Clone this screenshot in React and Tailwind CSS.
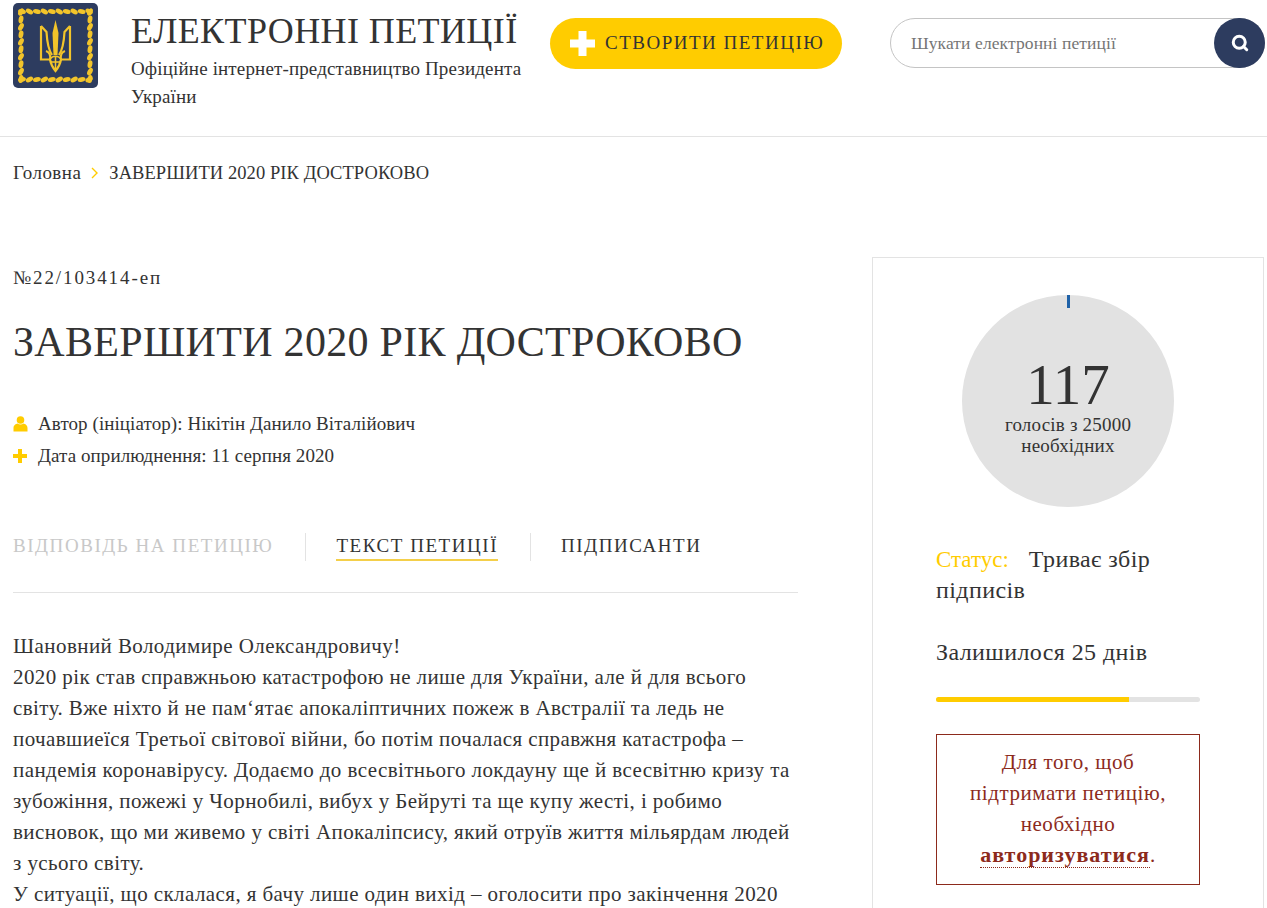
import React from 'react';
import { Search } from 'lucide-react';

const serif = "font-['Liberation_Serif','Times_New_Roman',serif]";

// leaves of the wreath around the trident, pairs along each side
const leaves = [];
for (let i = 0; i < 10; i++) {
  const p = 9 + i * 7.45;
  const tilt = i % 2 ? 32 : 14;
  leaves.push(<ellipse key={'t' + i} cx={p} cy={8.5} rx="4" ry="2.4" transform={`rotate(${tilt} ${p} 8.5)`} />);
  leaves.push(<ellipse key={'b' + i} cx={p} cy={76.5} rx="4" ry="2.4" transform={`rotate(${-tilt} ${p} 76.5)`} />);
  leaves.push(<ellipse key={'l' + i} cx={8} cy={p} rx="4" ry="2.4" transform={`rotate(${-48 - tilt} 8 ${p})`} />);
  leaves.push(<ellipse key={'r' + i} cx={77} cy={p} rx="4" ry="2.4" transform={`rotate(${-48 - tilt} 77 ${p})`} />);
}

const Logo = () => (
  <svg width="85" height="85" viewBox="0 0 85 85" className="shrink-0">
    <rect width="85" height="85" rx="5" fill="#2d3c5f" />
    <g fill="#f2c42a">{leaves}</g>
    <path d="M42.5 17 L45.5 30 L44.5 52 L40.5 52 L39.5 30 Z" fill="#f2c42a" />
    <g fill="none" stroke="#f2c42a" strokeWidth="2.2">
      <path d="M28 23 L33.5 29 C34 38 35 46 39 52 M28 23 V56.5 H37" />
      <path d="M57 23 L51.5 29 C51 38 50 46 46 52 M57 23 V56.5 H48" />
      <path d="M33 48 C36 49 38 51 37 56.5 C38 62 40 65 42.5 68 C45 65 47 62 48 56.5 C47 51 49 49 52 48" />
      <path d="M37 56.5 C39 52 46 52 48 56.5 M37.5 59 H47.5 M42.5 53 V66" strokeWidth="1.5" />
    </g>
  </svg>
);

// blocky plus, square ends like the icon font on the site
const BlockPlus = ({ size, thick, color }) => {
  const a = (size - thick) / 2;
  return (
    <svg width={size} height={size} viewBox={`0 0 ${size} ${size}`} className="shrink-0" fill={color}>
      <rect x={a} y="0" width={thick} height={size} />
      <rect x="0" y={a} width={size} height={thick} />
    </svg>
  );
};

const UserIcon = () => (
  <svg width="15" height="16" viewBox="0 0 15 16" fill="#ffcc00" className="shrink-0">
    <circle cx="7.5" cy="4" r="3.8" />
    <path d="M0.5 15.5 V12 C0.5 9.2 3 8 4.5 7.6 C6.2 8.8 8.8 8.8 10.5 7.6 C12 8 14.5 9.2 14.5 12 V15.5 Z" />
  </svg>
);

const Tab = ({ children, muted, active }) => (
  <span
    className={
      'text-[19px] leading-[24px] tracking-[1.55px] ' +
      (muted ? 'text-[#c8c8c8] ' : 'text-[#333] ') +
      (active ? 'border-b-2 border-[#f4cf4a] pb-[1px]' : 'pb-[3px]')
    }
  >
    {children}
  </span>
);

const bodyLines = [
  'Шановний Володимире Олександровичу!',
  '2020 рік став справжньою катастрофою не лише для України, але й для всього',
  'світу. Вже ніхто й не пам‘ятає апокаліптичних пожеж в Австралії та ледь не',
  'почавшиеїся Третьої світової війни, бо потім почалася справжня катастрофа –',
  'пандемія коронавірусу. Додаємо до всесвітнього локдауну ще й всесвітню кризу та',
  'зубожіння, пожежі у Чорнобилі, вибух у Бейруті та ще купу жесті, і робимо',
  'висновок, що ми живемо у світі Апокаліпсису, який отруїв життя мільярдам людей',
  'з усього світу.',
  'У ситуації, що склалася, я бачу лише один вихід – оголосити про закінчення 2020',
];

const App = () => {
  return (
    <div className={`${serif} w-[1267px] h-[908px] overflow-hidden bg-white text-[#333]`}>
      {/* Header */}
      <header className="h-[137px] border-b border-[#e3e3e3] flex items-start pl-[13px] pt-[3px]">
        <Logo />
        <div className="ml-[33px] w-[410px] pt-[6px]">
          <h1 className="text-[36px] leading-[44px] text-[#333] tracking-[0.4px] whitespace-nowrap">ЕЛЕКТРОННІ ПЕТИЦІЇ</h1>
          <p className="mt-[2px] text-[19px] leading-[28px] tracking-[0.15px] text-[#333]">
            Офіційне інтернет-представництво Президента України
          </p>
        </div>
        <div className="ml-[9px] mt-[15px] w-[292px] h-[51px] rounded-full bg-[#ffcc00] flex items-center pl-[20px]">
          <BlockPlus size={25} thick={8} color="#fff" />
          <span className="ml-[10px] text-[19px] tracking-[1.5px] text-[#333] whitespace-nowrap">СТВОРИТИ ПЕТИЦІЮ</span>
        </div>
        <div className="ml-[48px] mt-[15px] w-[375px] h-[50px] rounded-full border border-[#c4c4c4] flex items-center justify-between pl-[20px]">
          <span className="text-[17.5px] tracking-[0.1px] text-[#757575] whitespace-nowrap">Шукати електронні петиції</span>
          <span className="w-[51px] h-[50px] -mr-[1px] rounded-full bg-[#2d3c5f] flex items-center justify-center">
            <Search size={18} strokeWidth={4} className="text-white" />
          </span>
        </div>
      </header>

      {/* Breadcrumb */}
      <nav className="pl-[13px] pt-[24px] flex items-center text-[19px] leading-[24px] text-[#333]">
        <span className="tracking-[0.45px]">Головна</span>
        <svg width="8" height="12" viewBox="0 0 8 12" className="ml-[10px] mr-[10px]" fill="none" stroke="#ffcc00" strokeWidth="1.4">
          <path d="M1 1l5 5-5 5" />
        </svg>
        <span className="text-[18.5px] tracking-[0.08px]">ЗАВЕРШИТИ 2020 РІК ДОСТРОКОВО</span>
      </nav>

      <div className="flex pl-[13px] pt-[72px]">
        {/* Main column */}
        <main className="w-[785px] shrink-0">
          <div className="pt-[9px] text-[19px] leading-[24px] tracking-[1.9px]">№22/103414-еп</div>
          <h2 className="mt-[28px] text-[42px] leading-[48px] text-[#333] tracking-[0.3px] whitespace-nowrap">
            ЗАВЕРШИТИ 2020 РІК ДОСТРОКОВО
          </h2>

          <div className="mt-[46px] text-[19px] leading-[24px] tracking-[0.08px]">
            <div className="flex items-center h-[24px]">
              <UserIcon />
              <span className="ml-[10px]">Автор (ініціатор): Нікітін Данило Віталійович</span>
            </div>
            <div className="flex items-center h-[24px] mt-[8px]">
              <BlockPlus size={14} thick={4} color="#ffcc00" />
              <span className="ml-[11px]">Дата оприлюднення: 11 серпня 2020</span>
            </div>
          </div>

          <div className="mt-[65px] flex items-center h-[28px]">
            <Tab muted>ВІДПОВІДЬ НА ПЕТИЦІЮ</Tab>
            <span className="w-px h-[28px] bg-[#e3e3e3] ml-[32px] mr-[30px]" />
            <Tab active>ТЕКСТ ПЕТИЦІЇ</Tab>
            <span className="w-px h-[28px] bg-[#e3e3e3] ml-[32px] mr-[30px]" />
            <Tab>ПІДПИСАНТИ</Tab>
          </div>
          <div className="mt-[31px] border-t border-[#e3e3e3]" />

          <div className="mt-[38px] text-[21px] leading-[31px] tracking-[0.42px] text-[#333] whitespace-nowrap">
            {bodyLines.map((line) => (
              <div key={line}>{line}</div>
            ))}
          </div>
        </main>

        {/* Side card */}
        <aside className="ml-[74px] w-[392px] h-[700px] shrink-0 border border-[#e3e3e3] px-[63px]">
          <div className="relative mx-auto mt-[37px] w-[212px] h-[212px] rounded-full bg-[#e2e2e2] flex flex-col items-center">
            <span className="absolute left-[105px] top-0 w-[3px] h-[13px] bg-[#1f62a8]" />
            <span className="mt-[59px] text-[57px] leading-[62px] text-[#333]">117</span>
            <span className="-mt-[2px] w-[150px] text-center text-[19px] leading-[21px] tracking-[0.2px]">голосів з 25000 необхідних</span>
          </div>
          <p className="mt-[37px] text-[24px] leading-[31px] tracking-[0.4px]">
            <span className="text-[#ffcc00] mr-[20px] text-[23px] tracking-normal">Статус:</span>Триває збір підписів
          </p>
          <p className="mt-[30px] text-[24px] leading-[32px] tracking-[0.4px]">Залишилося 25 днів</p>
          <div className="mt-[29px] h-[5px] rounded-full bg-[#e3e3e3] overflow-hidden">
            <div className="h-full w-[193px] bg-[#ffcc00]" />
          </div>
          <div className="mt-[32px] h-[151px] border border-[#8c2a1c] pt-[12px] text-center text-[21px] leading-[31px] tracking-[0.55px] text-[#8c2a1c]">
            <p>
              Для того, щоб
              <br />
              підтримати петицію,
              <br />
              необхідно
            </p>
            <p>
              <b className="text-[22px] leading-none tracking-[1px] border-b border-dotted border-[#8c2a1c]">авторизуватися</b>.
            </p>
          </div>
        </aside>
      </div>
    </div>
  );
};

export default App;
